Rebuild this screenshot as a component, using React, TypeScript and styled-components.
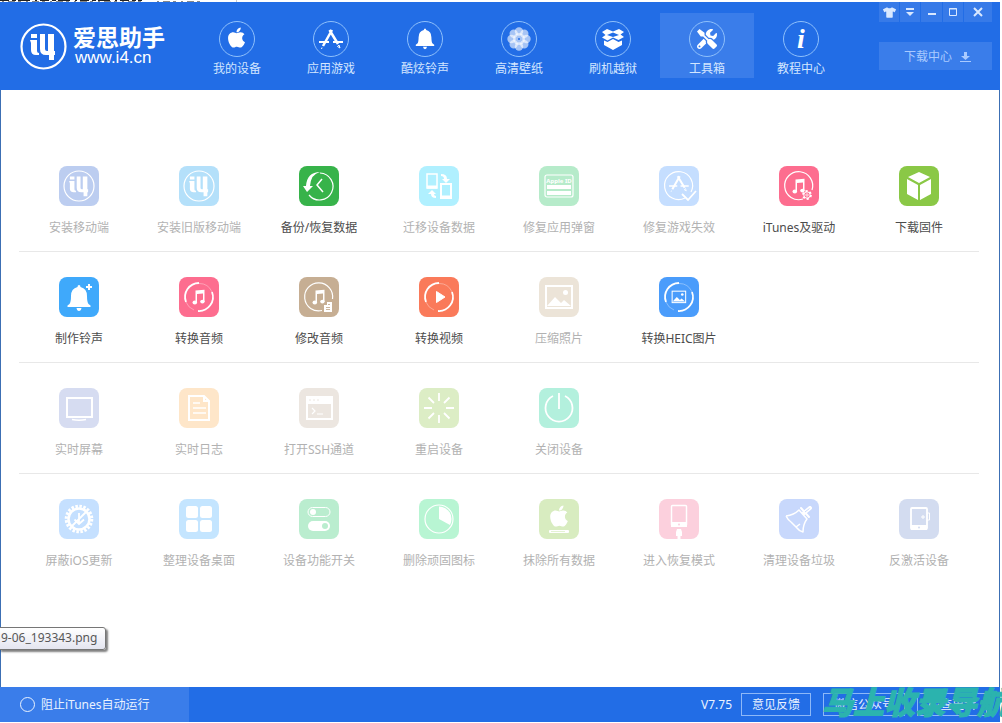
import React from 'react';
import styled, { createGlobalStyle } from 'styled-components';
import { FaApple, FaTools, FaTshirt } from 'react-icons/fa';

const GlobalStyle = createGlobalStyle`
  * { box-sizing: border-box; }
  body {
    margin: 0;
    background: #fff;
    overflow: hidden;
    font-family: "Noto Sans", "Noto Sans CJK SC", sans-serif;
    font-size: 12px;
    line-height: 16px;
  }
  button { font: inherit; color: inherit; border: 0; padding: 0; background: none; }
`;

const Page = styled.div`
  display: flex;
  flex-direction: column;
  min-height: 100vh;
  position: relative;
  overflow: hidden;
  padding: 0 2px 1px 0;
`;
const Backdrop = styled.svg`
  display: block;
  flex: none;
  width: 100%;
  height: 2px;
`;
const Header = styled.header`
  display: flex;
  height: 88px;
  flex: none;
  background: #226de6;
  padding-left: 20px;
`;
const Brand = styled.a`
  display: flex;
  align-items: center;
  gap: 6px;
  width: 170px;
  color: #fff;
  text-decoration: none;
  svg { width: 47px; height: 47px; flex: none; }
`;
const BrandText = styled.span`
  display: flex;
  flex-direction: column;
  white-space: nowrap;
`;
const BrandName = styled.strong`
  font-size: 23px;
  line-height: 24px;
  font-weight: 700;
`;
const BrandUrl = styled.span`
  padding-left: 2px;
  font-family: "Liberation Sans", sans-serif;
  font-size: 17px;
  line-height: 18px;
`;
const Nav = styled.nav`
  display: flex;
  align-items: flex-start;
  padding-top: 11px;
`;
const NavButton = styled.button<{ $active?: boolean }>`
  display: flex;
  flex-direction: column;
  align-items: center;
  gap: 4px;
  width: 94px;
  height: 65px;
  padding-top: 8px;
  color: #d3e6ff;
  background: ${p => (p.$active ? '#3a7dea' : 'transparent')};
  svg { flex: none; display: block; }
`;
const Aside = styled.div`
  display: flex;
  flex-direction: column;
  gap: 20px;
  width: 113px;
  margin: 0 8px 0 auto;
`;
const Controls = styled.div`
  display: flex;
  gap: 1px;
`;
const Control = styled.button`
  display: grid;
  place-items: center;
  flex: 1 0 20px;
  height: 20px;
  background: #377ae8;
  color: #d9e8ff;
  &:last-child { flex-basis: 28px; }
`;
const DownloadButton = styled.button`
  display: flex;
  align-items: center;
  justify-content: center;
  gap: 8px;
  height: 28px;
  padding: 2px 0 0 4px;
  background: #3a7dea;
  color: #a9caff;
`;
const Main = styled.main`
  flex: 1;
  border: solid #3c6fb4;
  border-width: 0 1px;
  padding: 51px 20px 0 18px;
`;
const Row = styled.section`
  display: grid;
  grid-template-columns: repeat(8, 1fr);
  padding: 25px 0 15px;
  border-bottom: 1px solid #e8e8e8;
  &:last-child { border-bottom: 0; }
`;
const Tool = styled.button`
  display: flex;
  flex-direction: column;
  align-items: center;
  gap: 14px;
  color: #4c4c4c;
  white-space: nowrap;
  &:disabled { color: #b2b2b2; }
`;
const Tile = styled.svg<{ $bg: string }>`
  width: 40px;
  height: 40px;
  border-radius: 8px;
  background: ${p => p.$bg};
  display: block;
`;
const Footer = styled.footer`
  display: flex;
  align-items: center;
  height: 35px;
  flex: none;
  background: #226de6;
  color: #e9f2ff;
  padding-right: 13px;
`;
const AutoRun = styled.label`
  display: flex;
  align-items: center;
  gap: 6px;
  width: 189px;
  height: 35px;
  padding-left: 20px;
  background: #3a7dea;
`;
const Toggle = styled.input`
  appearance: none;
  width: 15px;
  height: 15px;
  margin: 0;
  border: 1px solid #e9f2ff;
  border-radius: 50%;
`;
const Version = styled.span`
  margin: 0 9px 0 auto;
`;
const FooterButtons = styled.div`
  display: flex;
  gap: 12px;
`;
const FooterButton = styled.button<{ $wide?: boolean }>`
  width: ${p => (p.$wide ? 82 : 70)}px;
  height: 23px;
  border: 1px solid #8db8f8;
`;
const Watermark = styled.div`
  position: absolute;
  right: -6px;
  bottom: 5px;
  color: #2bb3ae;
  font-size: 31px;
  line-height: 32px;
  font-weight: 900;
  font-style: italic;
  -webkit-text-stroke: 1px #2bb3ae;
  white-space: nowrap;
  pointer-events: none;
`;
const Tooltip = styled.div`
  position: absolute;
  left: -1px;
  bottom: 73px;
  height: 23px;
  padding: 2px 8px 0 1px;
  border: 1px solid #767676;
  border-radius: 0 3px 3px 0;
  background: linear-gradient(#fff, #e4e5f0);
  box-shadow: 2px 2px 2px rgba(0, 0, 0, 0.5);
  color: #575757;
`;

const line = { fill: 'none', stroke: '#fff' } as const;

/* The i4 mark, centred on the origin inside a 30 unit circle. */
const Mark = () => (
  <g fill="#fff">
    <path d="M-12-12h6v4h-6zM-13-6h7V5q0 2 2 2v2h-3q-5 0-5-5v-7z" />
    <path d="M-3-12h5V3q0 2 2 2h1v-17h6V5h1v4h-1v5H6V9H3q-6 0-6-6z" />
  </g>
);

const Bell = () => (
  <path
    fill="#fff"
    d="M20 8q1.500 0 1.500 2 6.500 1.500 6.500 9 0 6 1.500 8l2 1.500V30H8.500v-1.500l2-1.500q1.500-2 1.500-8 0-7.500 6.500-9 0-2 1.500-2zM17.500 31h5q-.5 3-2.500 3t-2.500-3z"
  />
);

const Note = () => (
  <g fill="#fff">
    <path d="M16.500 13.500l9-.7V25H24v-8.500l-6 .5v9h-1.500z" />
    <ellipse cx="15.800" cy="25.500" rx="2.300" ry="1.900" />
    <ellipse cx="23.400" cy="24.600" rx="2.200" ry="1.900" />
  </g>
);

const Arcs = () => (
  <g {...line}>
    <path d="M7 25A14 14 0 0 1 20 6" strokeWidth="1.800" />
    <path d="M33 15A14 14 0 0 1 19 34" strokeWidth="1.800" />
    <path d="M20 6.500A14 14 0 0 1 33 15M7 25a14 14 0 0 0 8 8" opacity=".35" />
  </g>
);

const Sticks = () => (
  <g {...line} strokeWidth="2">
    <path d="M21 10L12 26M18.500 10L27 24" strokeWidth="2.500" />
    <path d="M8 22h10M22 22h10" />
    <path d="M28 25l1 3-2.500-1.500zM11 27.500l-.5 1.500" strokeWidth="1" />
  </g>
);

const Picture = () => (
  <>
    <rect x="7" y="9" width="26" height="22" {...line} strokeWidth="2" />
    <path d="M8 29l8-9 6 6 3-3 7 6z" fill="#fff" />
    <circle cx="26.500" cy="15.500" r="2.500" fill="#fff" />
  </>
);

const Ring = () => <circle cx="20" cy="20" r="14" {...line} strokeWidth="1.200" />;

const glyphs: Record<string, React.ReactNode> = {
  mark: (
    <>
      <circle cx="20" cy="20" r="15" {...line} strokeWidth="1.200" />
      <g transform="translate(20 19.500) scale(.76)"><Mark /></g>
    </>
  ),
  restore: (
    <>
      <path d="M21 7a13.500 13.500 0 1 1-11 22" {...line} strokeWidth="1.200" />
      <path d="M21 6Q12 8 11 20h3l-6 6-4-6h3Q8 6 21 6z" fill="#fff" />
      <path d="M23 13l-5 6 6 7" {...line} strokeWidth="1.500" />
    </>
  ),
  migrate: (
    <>
      <rect x="8" y="8" width="10" height="14" {...line} strokeWidth="1.500" />
      <path d="M8 21h10M22 31h10" {...line} strokeWidth="3" />
      <rect x="22" y="18" width="10" height="14" {...line} strokeWidth="2" />
      <path d="M22 8q6 0 6 5h3l-4 4-4-4h2q0-3-3-3zM17 32q-5 0-5-4H9l4-4 4 4h-2q0 2 2 2z" fill="#fff" />
    </>
  ),
  appleId: (
    <>
      <rect x="6" y="9" width="28" height="22" rx="2" {...line} strokeWidth="1.200" />
      <text x="20" y="17" textAnchor="middle" fontSize="6" fontWeight="700" fill="#fff">Apple ID</text>
      <path d="M8 19h24v4H8zM8 25h24v4H8z" fill="#fff" />
    </>
  ),
  game: (
    <>
      <path d="M32 26A14 14 0 1 0 26 32" {...line} strokeWidth="1.200" />
      <g transform="translate(3.500 2) scale(.82)"><Sticks /></g>
      <path d="M23 28l6 6 8-9" {...line} strokeWidth="1.800" />
    </>
  ),
  itunes: (
    <>
      <path d="M33 24A14 14 0 1 0 24 33" {...line} strokeWidth="1.200" />
      <Note />
      <circle cx="28" cy="29" r="4" {...line} strokeWidth="1.800" strokeDasharray="2.200 2" />
      <circle cx="28" cy="29" r="3.200" {...line} />
      <circle cx="28" cy="29" r="1.200" {...line} strokeWidth=".8" />
    </>
  ),
  cube: <path d="M20 6l11 5-11 6-11-6zM8 13l11 6v15L8 28zM32 13l-11 6v15l11-6z" fill="#fff" />,
  ringtone: (
    <>
      <Bell />
      <path d="M30 7v6M27 10h6" {...line} strokeWidth="2" />
    </>
  ),
  audio: <><Arcs /><Note /></>,
  editAudio: (
    <>
      <path d="M33.500 22A14 14 0 1 0 23 33.500" {...line} strokeWidth="1.200" />
      <Note />
      <path d="M25 28h3v-3h5v10h-8z" fill="#fff" />
      <path d="M27 30.500h4M27 32.500h4M29 27.500h2" stroke="#c6ae93" strokeWidth=".9" />
    </>
  ),
  video: (
    <>
      <Arcs />
      <path d="M17.500 14.500v11l8.500-5.500z" fill="#fff" stroke="#fff" strokeLinejoin="round" />
    </>
  ),
  photo: <Picture />,
  heic: (
    <>
      <Arcs />
      <g transform="translate(9.500 9.500) scale(.52)"><Picture /></g>
    </>
  ),
  screen: (
    <>
      <rect x="8" y="10" width="25" height="19" {...line} strokeWidth="2" />
      <path d="M13 31.500q7 1.500 14 0" {...line} strokeWidth="1.500" />
    </>
  ),
  log: (
    <>
      <path d="M10 8h15l5 5v19H10zM25 8v5h5" {...line} strokeWidth="2" />
      <path d="M14 15h7M14 20h13M14 25h13" {...line} strokeWidth="1.500" />
    </>
  ),
  ssh: (
    <>
      <rect x="8" y="9" width="25" height="22" {...line} strokeWidth="2" />
      <path d="M8 9h25v7H8z" fill="#fff" />
      <path d="M13 20l3 3-3 3M18 26h6" {...line} strokeWidth="1.200" />
      <path d="M10 12h2M14 12h2M18 12h2" stroke="#ece6e0" />
    </>
  ),
  restart: (
    <path
      d="M20 5v8M20 27v8M5 20h8M27 20h8M9.500 9.500l5.500 5.500M25 25l5.500 5.500M30.500 9.500L25 15M15 25l-5.500 5.500"
      {...line}
      strokeWidth="1.800"
    />
  ),
  power: (
    <>
      <path d="M14 8a13.500 13.500 0 1 0 12 0" {...line} strokeWidth="1.800" />
      <path d="M20 5v16" {...line} strokeWidth="1.800" />
    </>
  ),
  update: (
    <>
      <circle cx="20" cy="20" r="12.800" {...line} strokeWidth="3" strokeDasharray="2.500 1.520" />
      <circle cx="20" cy="20" r="10.500" {...line} strokeWidth="2.500" />
      <path d="M20 14v11M15.500 20.500L20 25l5-4.500M13 27l14-14" {...line} strokeWidth="1.800" />
    </>
  ),
  desktop: (
    <g fill="#fff">
      <rect x="7" y="7" width="12" height="12" rx="2.500" />
      <rect x="21" y="7" width="12" height="12" rx="2.500" />
      <rect x="7" y="21" width="12" height="12" rx="2.500" />
      <rect x="21" y="21" width="12" height="12" rx="2.500" />
    </g>
  ),
  switches: (
    <>
      <rect x="9" y="8.500" width="22" height="9" rx="4.500" {...line} />
      <circle cx="14" cy="13" r="3" fill="#fff" />
      <rect x="9" y="22" width="22" height="10" rx="5" fill="#fff" />
      <circle cx="26" cy="27" r="3" fill="#baedcf" />
    </>
  ),
  pie: (
    <>
      <Ring />
      <path d="M20 20V7.500a12.500 12.500 0 0 1 11 18.500z" fill="#fff" />
    </>
  ),
  erase: (
    <>
      <FaApple x="8" y="5" size={24} color="#fff" />
      <rect x="10" y="31" width="20" height="3" rx="1" fill="#fff" />
      <path d="M12 32.500h14" stroke="#d8ecc0" strokeWidth=".7" />
    </>
  ),
  recovery: (
    <>
      <rect x="12.500" y="6.500" width="15" height="20" rx="1" {...line} strokeWidth="1.500" />
      <path d="M12 23h16v5H12zM18 30h4l1 3v4h-1.500v3h-3v-3H17v-4z" fill="#fff" />
      <circle cx="20" cy="25.500" r="1" fill="#fcd0dd" />
    </>
  ),
  clean: (
    <>
      <path d="M7 17q8-1 13-6l8 9q-4 5-4 13-4-1-7-5M7 17q2 4 5 6M17 28l4-3M17 28l-5-5" {...line} strokeWidth="1.500" strokeLinejoin="round" />
      <path d="M22 9l8 9M25 14l6-6" {...line} strokeWidth="2" strokeLinecap="round" />
      <path d="M25 14l6-5" {...line} strokeWidth="4" strokeLinecap="round" />
      <path d="M26 13l4.500-3.500" stroke="#c8d8fc" />
    </>
  ),
  deactivate: (
    <>
      <rect x="12" y="9" width="16" height="21" rx="1" {...line} strokeWidth="1.800" />
      <path d="M12 26h16v5H12z" fill="#fff" />
      <circle cx="20" cy="28.500" r="1" fill="#d3dcf0" />
      <path d="M28 14h2.500v7H28M22 18h4M24 16v4" {...line} />
    </>
  ),
};

type ToolItem = [label: string, glyph: string, bg: string, enabled?: boolean];

const rows: ToolItem[][] = [
  [
    ['安装移动端', 'mark', '#bccdf0'],
    ['安装旧版移动端', 'mark', '#b4e0fa'],
    ['备份/恢复数据', 'restore', '#37b34a', true],
    ['迁移设备数据', 'migrate', '#b0f0ff'],
    ['修复应用弹窗', 'appleId', '#b6ebca'],
    ['修复游戏失效', 'game', '#c5deff'],
    ['iTunes及驱动', 'itunes', '#fd6d8f', true],
    ['下载固件', 'cube', '#8ac846', true],
  ],
  [
    ['制作铃声', 'ringtone', '#3fa9fb', true],
    ['转换音频', 'audio', '#fd6d8f', true],
    ['修改音频', 'editAudio', '#c6ae93', true],
    ['转换视频', 'video', '#fa7a5a', true],
    ['压缩照片', 'photo', '#ece4d8'],
    ['转换HEIC图片', 'heic', '#4a9cfb', true],
  ],
  [
    ['实时屏幕', 'screen', '#d6dcf1'],
    ['实时日志', 'log', '#fee6c9'],
    ['打开SSH通道', 'ssh', '#ece6e0'],
    ['重启设备', 'restart', '#dcedc5'],
    ['关闭设备', 'power', '#b3f0dd'],
  ],
  [
    ['屏蔽iOS更新', 'update', '#c5e0ff'],
    ['整理设备桌面', 'desktop', '#c4e5ff'],
    ['设备功能开关', 'switches', '#baedcf'],
    ['删除顽固图标', 'pie', '#b8f5d3'],
    ['抹除所有数据', 'erase', '#d8ecc0'],
    ['进入恢复模式', 'recovery', '#fcd0dd'],
    ['清理设备垃圾', 'clean', '#c8d8fc'],
    ['反激活设备', 'deactivate', '#d3dcf0'],
  ],
];

const petals = [0, 45, 90, 135, 180, 225, 270, 315];

const navItems: { label: string; icon: React.ReactNode; active?: boolean }[] = [
  { label: '我的设备', icon: <FaApple x="6" y="5" size={23} color="#fff" /> },
  { label: '应用游戏', icon: <g transform="translate(-2 -1)"><Sticks /></g> },
  { label: '酷炫铃声', icon: <g transform="translate(2 1) scale(.8)"><Bell /></g> },
  {
    label: '高清壁纸',
    icon: (
      <g fill="#fff">
        {petals.map(a => (
          <circle key={a} cx="18" cy="10.500" r="4.200" opacity=".6" transform={`rotate(${a} 18 18)`} />
        ))}
        <circle cx="18" cy="18" r="6" opacity=".6" />
        <circle cx="18" cy="18" r="1" fill="#226de6" />
      </g>
    ),
  },
  {
    label: '刷机越狱',
    icon: (
      <path
        fill="#fff"
        d="M12 8l6 2.500 6-2.500 5 3-3.500 2.500 3.500 2.500-5.500 3L18 16.500 12.500 19.500 7 16.500l3.500-2.500L7 11zM18 11.500L12 14l6 2 6-2zM9 19.500l3.500 1.500L18 18l5.500 3 3.500-1.500V24l-9 5-9-5z"
        fillRule="evenodd"
      />
    ),
  },
  { label: '工具箱', icon: <FaTools x="8" y="8" size={20} color="#fff" />, active: true },
  {
    label: '教程中心',
    icon: (
      <text x="18" y="27" textAnchor="middle" fill="#fff" fontFamily="Liberation Serif, serif" fontSize="28" fontWeight="700" fontStyle="italic">
        i
      </text>
    ),
  },
];

export default function App() {
  return (
    <Page>
      <GlobalStyle />
      <Backdrop aria-hidden="true">
        <path d="M0 .5h142" stroke="#222" strokeDasharray="9 3 4 2 12 5 2 3" />
        <path d="M2 1.500h140M157 1.500h44" stroke="#888" strokeDasharray="2 4 7 3 3 5" />
        <path d="M236.500 0v2" stroke="#ccc" />
      </Backdrop>
      <Header>
        <Brand href="#">
          <svg viewBox="0 0 47 47" aria-hidden="true">
            <circle cx="23.500" cy="23.500" r="22" fill="none" stroke="#fff" strokeWidth="2.200" />
            <g transform="translate(23 23)"><Mark /></g>
          </svg>
          <BrandText>
            <BrandName>爱思助手</BrandName>
            <BrandUrl>www.i4.cn</BrandUrl>
          </BrandText>
        </Brand>
        <Nav>
          {navItems.map(item => (
            <NavButton key={item.label} $active={item.active}>
              <svg width="36" height="36" viewBox="0 0 36 36" aria-hidden="true">
                <circle cx="18" cy="18" r="17.500" fill="none" stroke="#8fc0fb" />
                {item.icon}
              </svg>
              {item.label}
            </NavButton>
          ))}
        </Nav>
        <Aside>
          <Controls>
            <Control aria-label="换肤"><FaTshirt size={13} /></Control>
            <Control aria-label="菜单">
              <svg width="10" height="10" fill="currentColor"><path d="M1 1h8v2H1zM1 5h8L5 9z" /></svg>
            </Control>
            <Control aria-label="最小化">
              <svg width="10" height="10" fill="currentColor"><path d="M1 6h8v2H1z" /></svg>
            </Control>
            <Control aria-label="最大化">
              <svg width="10" height="10" fill="none" stroke="currentColor"><path d="M1.500 1.500h7v7h-7zM1 2h8" /></svg>
            </Control>
            <Control aria-label="关闭">
              <svg width="10" height="10" fill="none" stroke="currentColor" strokeWidth="2"><path d="M1 1l8 8M9 1L1 9" /></svg>
            </Control>
          </Controls>
          <DownloadButton>
            下载中心
            <svg width="11" height="11" fill="currentColor" aria-hidden="true"><path d="M4 0h3v4h3L5.500 8 1 4h3zM0 9h11v1H0z" /></svg>
          </DownloadButton>
        </Aside>
      </Header>
      <Main>
        {rows.map((row, i) => (
          <Row key={i}>
            {row.map(([label, glyph, bg, enabled]) => (
              <Tool key={label} disabled={!enabled}>
                <Tile $bg={bg} viewBox="0 0 40 40" aria-hidden="true">{glyphs[glyph]}</Tile>
                {label}
              </Tool>
            ))}
          </Row>
        ))}
      </Main>
      <Footer>
        <AutoRun>
          <Toggle type="checkbox" />
          阻止iTunes自动运行
        </AutoRun>
        <Version>V7.75</Version>
        <FooterButtons>
          <FooterButton>意见反馈</FooterButton>
          <FooterButton $wide>微信公众号</FooterButton>
          <FooterButton>检查更新</FooterButton>
        </FooterButtons>
      </Footer>
      <Tooltip>9-06_193343.png</Tooltip>
      <Watermark>马上收录导航</Watermark>
    </Page>
  );
}
